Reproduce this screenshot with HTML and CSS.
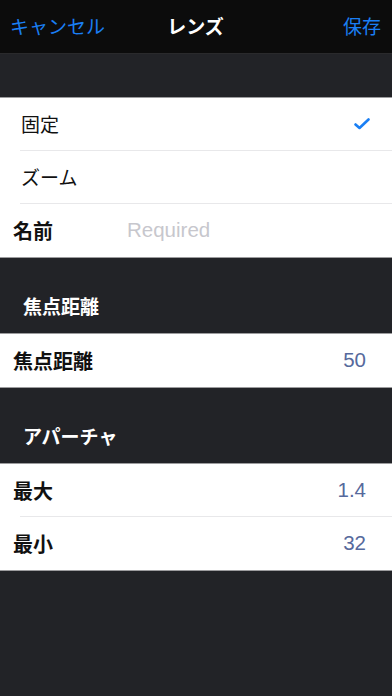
FILE: index.html
```html
<!DOCTYPE html>
<html lang="ja">
<head>
    <meta charset="UTF-8">
    <meta name="viewport" content="width=device-width, initial-scale=1.0">
    <title>レンズ</title>
    <link rel="stylesheet" href="styles.css">
</head>
<body>

    <div class="navbar">
        <span class="nav-btn">キャンセル</span>
        <span class="nav-title">レンズ</span>
        <span class="nav-btn right">保存</span>
    </div>

    <div class="spacer"></div>

    <div class="group">
        <div class="row option">
            <span class="label">固定</span>
            <svg class="check" width="16" height="12" viewBox="0 0 16 12">
                <path d="M1.5 6.5 L5.5 10 L14.5 1.5" fill="none" stroke="#1a7ff4" stroke-width="2.6" stroke-linecap="round" stroke-linejoin="round"/>
            </svg>
        </div>
        <div class="row option">
            <span class="label">ズーム</span>
        </div>
        <div class="row field">
            <span class="label bold">名前</span>
            <span class="placeholder">Required</span>
        </div>
    </div>

    <div class="section-head">焦点距離</div>
    <div class="group">
        <div class="row field">
            <span class="label bold">焦点距離</span>
            <span class="value">50</span>
        </div>
    </div>

    <div class="section-head">アパーチャ</div>
    <div class="group">
        <div class="row field">
            <span class="label bold">最大</span>
            <span class="value">1.4</span>
        </div>
        <div class="row field">
            <span class="label bold">最小</span>
            <span class="value">32</span>
        </div>
    </div>

</body>
</html>
```

FILE: styles.css
```css
body {
    margin: 0;
    background: #222327;
    font-family: "Noto Sans CJK JP", "Liberation Sans", sans-serif;
    height: 696px;
    overflow: hidden;
}
.navbar {
    height: 54px;
    background: #0c0c0c;
    border-bottom: 1px solid #2a2a2c;
    box-sizing: border-box;
    display: grid;
    grid-template-columns: 1fr auto 1fr;
    align-items: center;
    padding: 0 11px 2px 10px;
}
.nav-btn {
    color: #1a7ff4;
    font-size: 19px;
}
.nav-btn.right {
    text-align: right;
}
.nav-title {
    color: white;
    font-size: 19px;
    font-weight: bold;
}
.spacer {
    height: 43px;
}
.group {
    background: white;
    border-top: 1px solid #9c9c9e;
    border-bottom: 1px solid #9c9c9e;
}
.row {
    height: 53px;
    display: flex;
    align-items: center;
    box-sizing: border-box;
    padding-right: 26px;
    margin-left: 20px;
    border-bottom: 1px solid #e8e8ea;
}
.row:last-child {
    border-bottom: none;
}
.option {
    padding-right: 22px;
}
.field {
    margin-left: 0;
    padding-left: 13px;
}
.field:not(:last-child) {
    border-bottom: none;
    background: linear-gradient(#e8e8ea, #e8e8ea) 20px 100% / 100% 1px no-repeat;
}
.label {
    font-size: 19px;
    color: #111;
    margin-left: 1px;
    margin-top: -1px;
}
.bold {
    font-weight: bold;
    font-size: 20px;
    margin-left: 0;
    margin-top: 0;
}
.placeholder {
    margin-left: 74px;
    font-family: "Liberation Sans", sans-serif;
    font-size: 20.5px;
    color: #c7c7cd;
    margin-top: -1px;
}
.value {
    margin-left: auto;
    font-family: "Liberation Sans", sans-serif;
    font-size: 20.5px;
    color: #56699c;
    margin-top: -1px;
}
.check {
    margin-left: auto;
}
.section-head {
    height: 75px;
    box-sizing: border-box;
    padding: 34px 0 0 23px;
    color: white;
    font-size: 19px;
    font-weight: bold;
}
```
